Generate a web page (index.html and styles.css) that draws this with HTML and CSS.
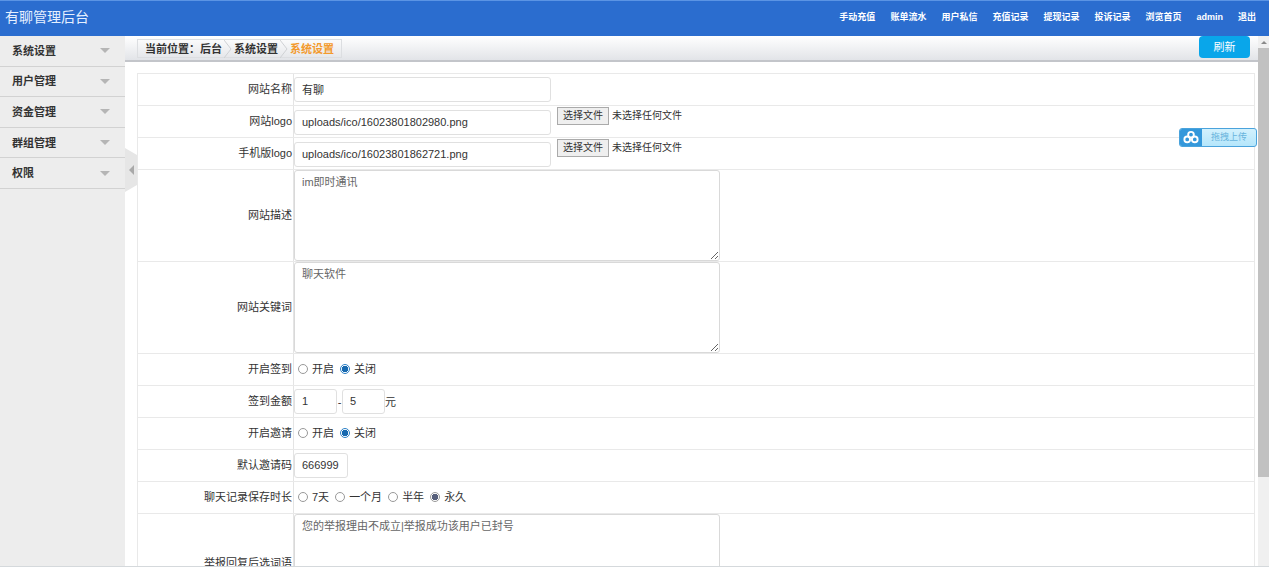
FILE: index.html
```html
<!DOCTYPE html>
<html lang="zh-CN">
<head>
<meta charset="utf-8">
<title>有聊管理后台</title>
<link rel="stylesheet" href="styles.css">
</head>
<body>
<header class="header">
  <h1 class="brand">有聊管理后台</h1>
  <nav class="topnav">
    <a href="#">手动充值</a>
    <a href="#">账单流水</a>
    <a href="#">用户私信</a>
    <a href="#">充值记录</a>
    <a href="#">提现记录</a>
    <a href="#">投诉记录</a>
    <a href="#">浏览首页</a>
    <a href="#">admin</a>
    <a href="#">退出</a>
  </nav>
</header>
<div class="layout">
  <aside class="sidebar">
    <nav class="menu">
      <a href="#">系统设置</a>
      <a href="#">用户管理</a>
      <a href="#">资金管理</a>
      <a href="#">群组管理</a>
      <a href="#">权限</a>
    </nav>
    <button class="collapse" type="button" aria-label="收起菜单">
      <svg viewBox="0 0 12 44"><path d="M0 0 L12 7 V37 L0 44 Z" fill="#e6e6e6"/><path d="M9 17 V27 L4 22 Z" fill="#a9a9a9"/></svg>
    </button>
  </aside>
  <main class="main">
    <div class="toolbar">
      <nav class="crumbs">
        <span>当前位置：后台</span>
        <svg class="sep" viewBox="0 0 8 18"><path d="M0 0 L7 9 L0 18" fill="none" stroke="#cfd1d4"/></svg>
        <a href="#">系统设置</a>
        <svg class="sep" viewBox="0 0 8 18"><path d="M0 0 L7 9 L0 18" fill="none" stroke="#cfd1d4"/></svg>
        <a class="current" href="#">系统设置</a>
      </nav>
      <button class="refresh" type="button">刷新</button>
    </div>
    <form class="form">
      <div class="row">
        <label class="name" for="site">网站名称</label>
        <div class="field"><input class="text wide" id="site" type="text" value="有聊"></div>
      </div>
      <div class="row">
        <label class="name" for="logo">网站logo</label>
        <div class="field upload">
          <input class="text wide" id="logo" type="text" value="uploads/ico/16023801802980.png">
          <label class="file"><input type="file"><span class="file-button">选择文件</span><span>未选择任何文件</span></label>
        </div>
      </div>
      <div class="row">
        <label class="name" for="mlogo">手机版logo</label>
        <div class="field upload">
          <input class="text wide" id="mlogo" type="text" value="uploads/ico/16023801862721.png">
          <label class="file"><input type="file"><span class="file-button">选择文件</span><span>未选择任何文件</span></label>
        </div>
      </div>
      <div class="row">
        <label class="name" for="desc">网站描述</label>
        <div class="field"><textarea class="area" id="desc">im即时通讯</textarea></div>
      </div>
      <div class="row">
        <label class="name" for="keys">网站关键词</label>
        <div class="field"><textarea class="area" id="keys">聊天软件</textarea></div>
      </div>
      <div class="row">
        <span class="name" id="sign">开启签到</span>
        <div class="field radios" role="radiogroup" aria-labelledby="sign">
          <label><input type="radio" name="sign">开启</label>
          <label><input type="radio" name="sign" checked>关闭</label>
        </div>
      </div>
      <div class="row">
        <label class="name" for="min">签到金额</label>
        <div class="field">
          <input class="text small" id="min" type="text" value="1"><span class="dash">-</span><input class="text small" type="text" value="5" aria-label="最高金额"><span>元</span>
        </div>
      </div>
      <div class="row">
        <span class="name" id="invite">开启邀请</span>
        <div class="field radios" role="radiogroup" aria-labelledby="invite">
          <label><input type="radio" name="invite">开启</label>
          <label><input type="radio" name="invite" checked>关闭</label>
        </div>
      </div>
      <div class="row">
        <label class="name" for="code">默认邀请码</label>
        <div class="field"><input class="text code" id="code" type="text" value="666999"></div>
      </div>
      <div class="row">
        <span class="name" id="keep">聊天记录保存时长</span>
        <div class="field radios" role="radiogroup" aria-labelledby="keep">
          <label><input type="radio" name="keep">7天</label>
          <label><input type="radio" name="keep">一个月</label>
          <label><input type="radio" name="keep">半年</label>
          <label class="muted"><input type="radio" name="keep" checked>永久</label>
        </div>
      </div>
      <div class="row">
        <label class="name" for="reply">举报回复后选词语</label>
        <div class="field"><textarea class="area tall" id="reply">您的举报理由不成立|举报成功该用户已封号</textarea></div>
      </div>
    </form>
    <button class="dropzone" type="button">
      <svg viewBox="0 0 22 18"><g fill="none" stroke="#fff" stroke-width="2"><circle cx="11" cy="6" r="3"/><circle cx="7" cy="11" r="3"/><circle cx="15" cy="11" r="3"/></g></svg>
      <span>拖拽上传</span>
    </button>
  </main>
  <div class="rail" aria-hidden="true">
    <svg viewBox="0 0 12 12"><path d="M3 8 L6 5 L9 8 Z" fill="#8a8a8a"/></svg>
    <div class="thumb"></div>
  </div>
</div>
</body>
</html>
```
FILE: styles.css
```css
* { box-sizing: border-box; }

body {
  margin: 0;
  height: 100vh;
  overflow: hidden;
  display: flex;
  flex-direction: column;
  background: #fff;
  border-bottom: 1px solid #d5d9dc;
  color: #333;
  font: 11px/16px "Liberation Sans", "Noto Sans CJK SC", sans-serif;
}

a { color: inherit; text-decoration: none; }
button, input, textarea { font: inherit; color: inherit; margin: 0; }

.header {
  flex: none;
  height: 36px;
  display: flex;
  align-items: center;
  justify-content: space-between;
  padding: 0 13px 3px 5px;
  background: #2b6dcf;
  border-top: 1px solid #5b94e4;
  color: #fff;
}
.brand { margin: 0; font-size: 14px; font-weight: 400; line-height: 20px; color: #e6f0ff; }
.topnav { display: flex; gap: 15px; font-size: 9px; font-weight: 700; }

.layout { flex: 1; min-height: 0; display: flex; }

.sidebar { position: relative; flex: none; width: 125px; background: #ededed; }
.menu { display: grid; grid-template-rows: repeat(5, 1fr); height: 153px; }
.menu a {
  display: flex;
  align-items: center;
  justify-content: space-between;
  padding: 0 15px 0 12px;
  border-bottom: 1px solid #d2d2d2;
  font-weight: 700;
}
.menu a::after {
  content: "";
  border: 5px solid transparent;
  border-top-color: #b5b5b5;
  border-bottom: 0;
}
.collapse {
  position: absolute;
  z-index: 1;
  left: 100%;
  top: 112px;
  width: 12px;
  height: 44px;
  padding: 0;
  border: 0;
  background: none;
}
.collapse svg { display: block; }

.main { position: relative; flex: 1; min-width: 0; overflow: hidden; }
.toolbar {
  height: 26px;
  display: flex;
  align-items: flex-start;
  justify-content: space-between;
  padding: 0 8px 0 12px;
  background: linear-gradient(#fff, #e2e4e8);
  border-bottom: 2px solid #c3c5ca;
}
.crumbs {
  display: flex;
  align-items: center;
  height: 19px;
  margin-top: 3px;
  padding: 0 7px;
  border: 1px solid #dcdee1;
  font-weight: 700;
}
.sep { width: 8px; height: 18px; margin: 0 2px; }
.current { color: #f39a2d; }
.refresh {
  width: 51px;
  height: 22px;
  padding: 0;
  border: 0;
  border-radius: 4px;
  background: #09a6ea;
  color: #fff;
}

.form { margin: 11px 3px 0 12px; border: 1px solid #e9e9e9; }
.row { display: flex; min-height: 32px; border-bottom: 1px solid #e9e9e9; }
.name {
  flex: none;
  width: 156px;
  display: flex;
  align-items: center;
  justify-content: flex-end;
  padding: 0 1px 1px 0;
  border-right: 1px solid #e4e4e4;
}
.field { display: flex; align-items: center; }
.text {
  height: 25px;
  padding: 0 7px 1px;
  border: 1px solid #e0e0e0;
  border-radius: 3px;
  background: #fff;
}
.wide { width: 257px; }
.small { width: 43px; }
.code { width: 54px; }
.dash { width: 5px; text-align: center; }
.upload .text { align-self: flex-end; margin-bottom: 2px; }
.file {
  position: relative;
  align-self: flex-start;
  display: flex;
  align-items: center;
  gap: 3px;
  margin: 1px 0 0 6px;
  font-size: 10px;
}
.file input { position: absolute; width: 52px; height: 18px; opacity: 0; }
.file-button {
  width: 52px;
  border: 1px solid #aaa;
  background: #efefef;
  text-align: center;
}
.area {
  display: block;
  width: 426px;
  height: 91px;
  padding: 3px 7px;
  border: 1px solid #d9d9d9;
  border-radius: 3px;
  resize: both;
  color: #666;
}
.tall { height: 98px; }
.radios { gap: 6px; padding: 0 0 2px 4px; }
.radios label { display: flex; align-items: center; gap: 4px; }
.radios input {
  appearance: none;
  width: 10px;
  height: 10px;
  border: 1px solid #999;
  border-radius: 50%;
  background: #fff;
}
.radios input:checked { border-color: #2b7fc6; background: radial-gradient(circle, #1769b0 0 3px, #fff 3px); }
.radios .muted input:checked { border-color: #999; background: radial-gradient(circle, #565f7a 0 3px, #fff 3px); }

.dropzone {
  position: absolute;
  right: 1px;
  top: 92px;
  width: 78px;
  height: 19px;
  display: flex;
  padding: 0;
  border: 1px solid #4aa3dc;
  border-radius: 3px;
  overflow: hidden;
  background: linear-gradient(#d2f1fd, #b5e6fb);
  color: #68b4dc;
  font-size: 9px;
  line-height: 17px;
}
.dropzone svg { width: 22px; height: 17px; background: #3498db; }
.dropzone span { flex: 1; text-align: center; }

.rail { flex: none; width: 11px; background: #f0f0f0; }
.rail svg { display: block; height: 12px; }
.thumb { height: 81%; background: #c1c1c1; }
```
